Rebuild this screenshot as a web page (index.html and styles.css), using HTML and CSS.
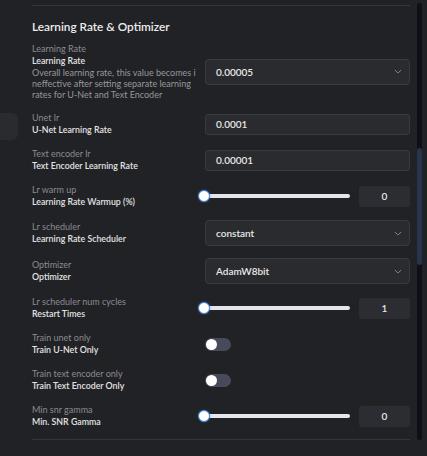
FILE: index.html
```html
<!DOCTYPE html>
<html lang="en">
<head>
<meta charset="utf-8">
<title>Learning Rate &amp; Optimizer</title>
<link rel="stylesheet" href="styles.css">
</head>
<body>
<div class="layout">
  <aside class="sidebar"><div class="side-item"></div></aside>
  <main class="content">
    <section class="panel">
      <h2 class="panel-title">Learning Rate &amp; Optimizer</h2>
      <div class="rows">
        <div class="row">
          <div class="label">
            <div class="key">Learning Rate</div>
            <div class="name">Learning Rate</div>
            <div class="desc">Overall learning rate, this value becomes ineffective after setting separate learning rates for U-Net and Text Encoder</div>
          </div>
          <div class="control"><div class="select">0.00005<svg class="chev" viewBox="0 0 10 6"><path d="M1 1l4 4 4-4"/></svg></div></div>
        </div>
        <div class="row">
          <div class="label"><div class="key">Unet lr</div><div class="name">U-Net Learning Rate</div></div>
          <div class="control"><div class="input">0.0001</div></div>
        </div>
        <div class="row">
          <div class="label"><div class="key">Text encoder lr</div><div class="name">Text Encoder Learning Rate</div></div>
          <div class="control"><div class="input">0.00001</div></div>
        </div>
        <div class="row">
          <div class="label"><div class="key">Lr warm up</div><div class="name">Learning Rate Warmup (%)</div></div>
          <div class="control slider-row"><div class="track"><span class="thumb"></span></div><div class="num">0</div></div>
        </div>
        <div class="row">
          <div class="label"><div class="key">Lr scheduler</div><div class="name">Learning Rate Scheduler</div></div>
          <div class="control"><div class="select">constant<svg class="chev" viewBox="0 0 10 6"><path d="M1 1l4 4 4-4"/></svg></div></div>
        </div>
        <div class="row">
          <div class="label"><div class="key">Optimizer</div><div class="name">Optimizer</div></div>
          <div class="control"><div class="select">AdamW8bit<svg class="chev" viewBox="0 0 10 6"><path d="M1 1l4 4 4-4"/></svg></div></div>
        </div>
        <div class="row">
          <div class="label"><div class="key">Lr scheduler num cycles</div><div class="name">Restart Times</div></div>
          <div class="control slider-row"><div class="track"><span class="thumb"></span></div><div class="num">1</div></div>
        </div>
        <div class="row">
          <div class="label"><div class="key">Train unet only</div><div class="name">Train U-Net Only</div></div>
          <div class="control"><div class="toggle"><span class="knob"></span></div></div>
        </div>
        <div class="row">
          <div class="label"><div class="key">Train text encoder only</div><div class="name">Train Text Encoder Only</div></div>
          <div class="control"><div class="toggle"><span class="knob"></span></div></div>
        </div>
        <div class="row">
          <div class="label"><div class="key">Min snr gamma</div><div class="name">Min. SNR Gamma</div></div>
          <div class="control slider-row"><div class="track"><span class="thumb"></span></div><div class="num">0</div></div>
        </div>
      </div>
    </section>
    <div class="scrollbar"><div class="scroll-thumb"></div></div>
  </main>
</div>
</body>
</html>
```
FILE: styles.css
```css
* { box-sizing: border-box; }
html, body { margin: 0; padding: 0; }
body {
  background: #212226;
  font-family: "Lato", "Open Sans", sans-serif;
  color: #e6e6e6;
  width: 427px;
  height: 456px;
  overflow: hidden;
}
.layout { display: flex; height: 456px; }
.sidebar { width: 18px; flex: none; padding-top: 113px; }
.side-item { height: 27px; background: #2a2b2f; border-radius: 0 6px 6px 0; }
.content { flex: 1; display: flex; padding-left: 14px; }
.panel {
  width: 378px;
  margin-top: 5px;
  border-top: 1px solid #35363b;
  height: 435px;
  border-bottom: 1px solid #35363b;
}
.panel-title {
  margin: 11px 0 0;
  font-size: 11.8px;
  line-height: 20px;
  font-weight: 600;
  color: #ececec;
}
.rows { display: flex; flex-direction: column; gap: 12px; margin-top: 6px; }
.row { display: grid; grid-template-columns: 165px 1fr; column-gap: 8px; align-items: center; }
.label { font-size: 9px; }
.key { color: #8a8b90; line-height: 12px; }
.name { color: #e2e2e2; font-weight: 600; font-size: 8.8px; line-height: 12px; }
.desc { color: #96979b; line-height: 11px; word-break: break-all; width: 164px; }
.control { display: flex; align-items: center; }
.select {
  width: 100%; height: 26px;
  border: 1px solid #3a3b40; border-radius: 4px; background: #2a2b2f;
  display: flex; align-items: center; justify-content: space-between;
  padding: 0 7px 0 10px;
  font-size: 10px; font-weight: 600; color: #e8e8e8;
}
.chev { width: 8px; height: 5px; fill: none; stroke: #8e8f94; stroke-width: 1.1; }
.input {
  width: 100%; height: 21px;
  border: 1px solid #3a3b40; border-radius: 3px; background: #2a2b2f;
  display: flex; align-items: center; padding: 0 10px;
  font-size: 10px; font-weight: 600; color: #e8e8e8;
}
.slider-row { gap: 9px; }
.track { position: relative; width: 145px; height: 4px; border-radius: 2px; background: #e4e6ea; }
.thumb {
  position: absolute; left: -7px; top: -4px;
  width: 12px; height: 12px; border-radius: 50%;
  background: #fff; border: 1.5px solid #3b7fd8;
  box-shadow: 0 0 2px rgba(59, 127, 216, 0.6);
}
.num {
  width: 51px; height: 21px; border-radius: 3px; background: #2c2d32;
  display: flex; align-items: center; justify-content: center;
  font-size: 10px; font-weight: 600; color: #e8e8e8;
}
.toggle { position: relative; width: 26px; height: 13px; border-radius: 7px; background: #474a5a; }
.knob { position: absolute; left: 1px; top: 1px; width: 11px; height: 11px; border-radius: 50%; background: #fff; }
.scrollbar { width: 5px; margin: 3px 0 0 7px; height: 437px; border-radius: 3px; background: #0f0f17; position: relative; }
.scroll-thumb { position: absolute; left: 0; top: 145px; width: 5px; height: 117px; border-radius: 3px; background: #26354b; }
```
